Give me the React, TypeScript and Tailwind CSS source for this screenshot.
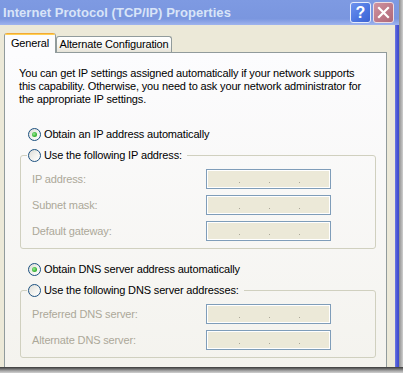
import React from "react";

function Radio({ checked = false }: { checked?: boolean }) {
  return (
    <span className="flex h-[13px] w-[13px] shrink-0 items-center justify-center rounded-full border border-[#1C5180] bg-[linear-gradient(135deg,#DCDCD7_0%,#F3F3EF_55%,#FFFFFF_100%)]">
      {checked && (
        <span className="h-[5px] w-[5px] rounded-full bg-[radial-gradient(circle_at_40%_40%,#9BEA97_0%,#3DB739_55%,#219F21_100%)]" />
      )}
    </span>
  );
}

function RadioRow({ checked = false, label }: { checked?: boolean; label: string }) {
  return (
    <div className="flex h-[13px] items-center gap-[3px] leading-[13px] text-black">
      <Radio checked={checked} />
      <span className="whitespace-nowrap">{label}</span>
    </div>
  );
}

function IpBox() {
  return (
    <div className="flex h-[20px] w-[125px] items-end gap-[29px] border border-[#7F9DB9] bg-[#ECE9D8] pb-[5px] pl-[32px] shadow-[inset_0_0_0_1px_#FFFFFF]">
      <span className="h-px w-px bg-[#ACA899]" />
      <span className="h-px w-px bg-[#ACA899]" />
      <span className="h-px w-px bg-[#ACA899]" />
    </div>
  );
}

function FieldRow({ label }: { label: string }) {
  return (
    <div className="flex items-center pl-[11px]">
      <span className="w-[174px] whitespace-nowrap text-[#ACA899]">{label}</span>
      <IpBox />
    </div>
  );
}

function Group({ legend, fields }: { legend: string; fields: string[] }) {
  return (
    <fieldset className="ml-[15px] w-[356px] rounded-[3px] border border-[#D0D0BF] px-0 pb-[7px] pt-[7px]">
      <legend className="ml-[6px] pl-[1px] pr-[5px]">
        <RadioRow label={legend} />
      </legend>
      <div className="flex flex-col gap-[6px]">
        {fields.map((f) => (
          <FieldRow key={f} label={f} />
        ))}
      </div>
    </fieldset>
  );
}

export default function App() {
  return (
    <div className="flex h-[373px] w-[403px] flex-col overflow-hidden bg-[#C8C8C8] font-['Liberation_Sans',Arial,sans-serif] text-[11px] tracking-[-0.15px]">
      <div className="flex h-[367px] w-[403px]">
        <div className="flex w-[399px] flex-col">
          {/* Title bar */}
          <div className="flex h-[25px] items-center justify-between bg-[linear-gradient(to_bottom,#7E9AE2_0%,#7A96DF_75%,#9FB4EE_100%)] pl-[3px] pr-[5px]">
            <span className="text-[13px] font-bold leading-none tracking-[0.05px] text-[#D8E4F8]">
              Internet Protocol (TCP/IP) Properties
            </span>
            <div className="flex gap-[2px]">
              <div className="flex h-[21px] w-[21px] items-center justify-center rounded-[3px] border border-[#E6ECFB] bg-[linear-gradient(135deg,#6E93EE_0%,#4A74E0_60%,#3D63D2_100%)] text-[16px] font-bold leading-none tracking-normal text-white">
                ?
              </div>
              <div className="flex h-[21px] w-[21px] items-center justify-center rounded-[3px] border border-[#EEDDE2] bg-[linear-gradient(135deg,#CF93A1_0%,#BC7787_60%,#AE6878_100%)]">
                <svg width="13" height="13" viewBox="0 0 13 13">
                  <path d="M2 2 L11 11 M11 2 L2 11" stroke="#FFFFFF" strokeWidth="2.2" strokeLinecap="square" />
                </svg>
              </div>
            </div>
          </div>
          {/* Body */}
          <div className="flex flex-1">
            <div className="flex flex-1 flex-col bg-[#ECE9D8] pl-[4px] pt-[8px]">
              {/* Tabs */}
              <div className="relative z-10 flex items-end">
                <div className="mb-[-1px] flex h-[20px] w-[52px] flex-col rounded-t-[3px] border-x border-[#919B9C] bg-[#FCFCFE]">
                  <div className="h-[3px] rounded-t-[3px] bg-[linear-gradient(to_bottom,#E68B2C_0%,#FFC83C_50%,#FFD86A_100%)]" />
                  <div className="flex flex-1 items-center justify-center pb-[2px] text-black">General</div>
                </div>
                <div className="flex h-[16px] w-[116px] items-center justify-center rounded-t-[3px] border-x border-t border-[#919B9C] bg-[linear-gradient(to_bottom,#FFFFFF_0%,#F6F6F2_60%,#E6E3D8_100%)] text-black">
                  Alternate Configuration
                </div>
              </div>
              {/* Panel */}
              <div className="flex w-[383px] flex-1 flex-col border-x border-t border-[#919B9C] bg-[linear-gradient(to_bottom,#FCFCFE_0%,#F4F3EE_100%)] pt-[14px]">
                <p className="ml-[14px] whitespace-nowrap leading-[13px] text-black">
                  You can get IP settings assigned automatically if your network supports
                  <br />
                  this capability. Otherwise, you need to ask your network administrator for
                  <br />
                  the appropriate IP settings.
                </p>
                <div className="ml-[23px] mt-[22px]">
                  <RadioRow checked label="Obtain an IP address automatically" />
                </div>
                <div className="mt-[8px]">
                  <Group legend="Use the following IP address:" fields={["IP address:", "Subnet mask:", "Default gateway:"]} />
                </div>
                <div className="ml-[23px] mt-[14px]">
                  <RadioRow checked label="Obtain DNS server address automatically" />
                </div>
                <div className="mt-[8px]">
                  <Group legend="Use the following DNS server addresses:" fields={["Preferred DNS server:", "Alternate DNS server:"]} />
                </div>
              </div>
            </div>
            <div className="w-[4px] bg-[linear-gradient(to_right,#6F7AE2_0%,#4B57D6_50%,#3F4BCB_100%)]" />
          </div>
        </div>
        <div className="w-[4px] bg-[linear-gradient(to_right,#8C8C8C_0%,#B4B4B4_60%,#CFCFCF_100%)]" />
      </div>
      <div className="h-[6px] bg-[linear-gradient(to_bottom,#3A3A3A_0%,#6A6A6A_30%,#A8A8A8_65%,#D0D0D0_100%)]" />
    </div>
  );
}
